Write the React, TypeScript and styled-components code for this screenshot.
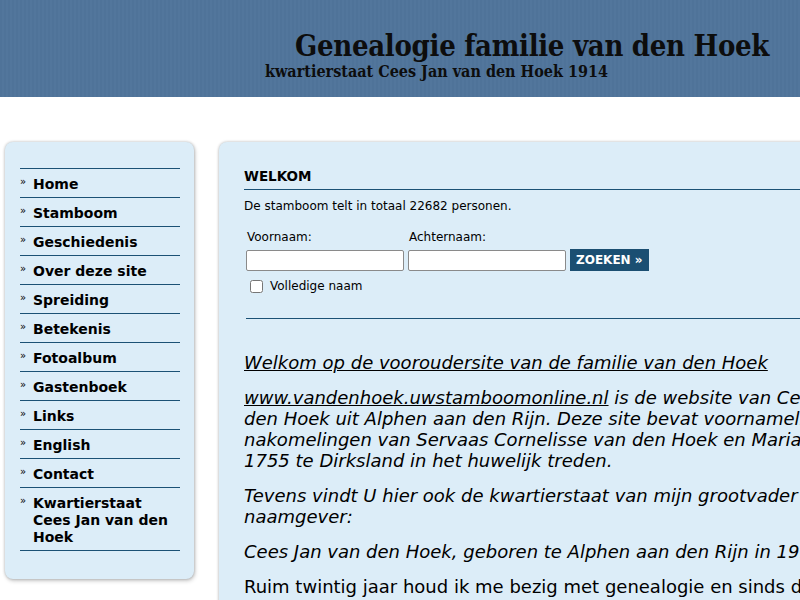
import React from "react";
import styled, { createGlobalStyle } from "styled-components";

const GlobalStyle = createGlobalStyle`
  html, body {
    margin: 0;
    padding: 0;
    background: #ffffff;
    overflow-x: hidden;
  }
  body {
    font-family: "DejaVu Sans", Verdana, sans-serif;
    color: #000;
  }
`;

const Header = styled.header`
  height: 97px;
  box-sizing: border-box;
  padding-top: 28px;
  background: repeating-linear-gradient(
    90deg,
    #4f7399 0px,
    #4f7399 2px,
    #52769c 2px,
    #52769c 4px
  );
`;

const SiteTitle = styled.h1`
  margin: 0 0 0 295px;
  font-family: "DejaVu Serif Condensed", "Liberation Serif", serif;
  font-weight: bold;
  font-size: 29px;
  line-height: 36px;
  color: #0d0d0d;
  white-space: nowrap;
  letter-spacing: -0.3px;
`;

const SiteSubtitle = styled.div`
  margin: -1px 0 0 265px;
  font-family: "DejaVu Serif Condensed", "Liberation Serif", serif;
  font-weight: bold;
  font-size: 16px;
  line-height: 18px;
  color: #0d0d0d;
  white-space: nowrap;
`;

const Page = styled.div`
  display: flex;
  align-items: flex-start;
  gap: 25px;
  padding: 45px 0 0 5px;
  width: 1000px;
`;

const Panel = styled.div`
  background: #dcedf8;
  border-radius: 8px;
  box-shadow: 0 0 3px rgba(0, 0, 0, 0.25), 1px 2px 4px rgba(0, 0, 0, 0.2);
  box-sizing: border-box;
`;

const Sidebar = styled(Panel)`
  width: 189px;
  flex: none;
  padding: 26px 14px 28px 15px;
`;

const NavList = styled.ul`
  list-style: none;
  margin: 0;
  padding: 0;
  border-top: 1px solid #1b5175;
`;

const NavItem = styled.li`
  display: flex;
  padding: 7px 0 4px 0;
  border-bottom: 1px solid #1b5175;
  font-size: 14px;
  font-weight: bold;
  line-height: 17px;

  &::before {
    content: "»";
    flex: none;
    width: 13px;
    font-size: 10px;
    line-height: 12px;
    font-weight: normal;
  }
`;

const Main = styled(Panel)`
  width: 721px;
  flex: none;
  padding: 26px 25px 30px 25px;
  min-height: 500px;
`;

const SectionTitle = styled.h2`
  margin: 0;
  padding: 0 0 4px;
  font-size: 13.5px;
  font-weight: bold;
  line-height: 17px;
  border-bottom: 1px solid #1b5175;
`;

const Count = styled.p`
  margin: 8px 0 0;
  font-size: 12px;
  line-height: 16px;
`;

const SearchForm = styled.form`
  display: grid;
  grid-template-columns: 158px 158px auto;
  column-gap: 4px;
  align-items: end;
  margin: 15px 0 0 2px;
  padding-bottom: 24px;
  border-bottom: 1px solid #1b5175;
`;

const Label = styled.label`
  font-size: 12px;
  line-height: 16px;
  padding: 0 0 4px 1px;
`;

const TextInput = styled.input`
  box-sizing: border-box;
  width: 158px;
  height: 21px;
  margin: 0;
  border: 1px solid #8a8a8a;
  border-radius: 2px;
  background: #fff;
`;

const SearchButton = styled.button`
  align-self: start;
  justify-self: start;
  height: 22px;
  margin: 0;
  padding: 0 6px;
  border: none;
  background: #1b4f72;
  color: #fff;
  font-family: "DejaVu Sans", Verdana, sans-serif;
  font-size: 12px;
  font-weight: bold;
`;

const CheckRow = styled.label`
  grid-column: 1 / 4;
  display: flex;
  align-items: center;
  gap: 7px;
  margin-top: 7px;
  padding-left: 4px;
  font-size: 12px;
  line-height: 16px;

  input {
    margin: 0;
    width: 13px;
    height: 13px;
  }
`;

const Story = styled.div`
  padding-top: 33px;
  font-size: 18px;
  line-height: 21px;
`;

const Para = styled.p<{ $italic?: boolean }>`
  margin: 0 0 14px;
  font-style: ${(p) => (p.$italic ? "italic" : "normal")};
`;

const Underlined = styled.span`
  text-decoration: underline;
`;

const navItems = [
  "Home",
  "Stamboom",
  "Geschiedenis",
  "Over deze site",
  "Spreiding",
  "Betekenis",
  "Fotoalbum",
  "Gastenboek",
  "Links",
  "English",
  "Contact",
  "Kwartierstaat Cees Jan van den Hoek",
];

export default function App() {
  return (
    <>
      <GlobalStyle />
      <Header>
        <SiteTitle>Genealogie familie van den Hoek</SiteTitle>
        <SiteSubtitle>kwartierstaat Cees Jan van den Hoek 1914</SiteSubtitle>
      </Header>
      <Page>
        <Sidebar>
          <NavList>
            {navItems.map((item) => (
              <NavItem key={item}>
                <span>{item}</span>
              </NavItem>
            ))}
          </NavList>
        </Sidebar>
        <Main>
          <SectionTitle>WELKOM</SectionTitle>
          <Count>De stamboom telt in totaal 22682 personen.</Count>
          <SearchForm onSubmit={(e) => e.preventDefault()}>
            <Label>Voornaam:</Label>
            <Label>Achternaam:</Label>
            <span />
            <TextInput type="text" />
            <TextInput type="text" />
            <SearchButton type="submit">ZOEKEN »</SearchButton>
            <CheckRow>
              <input type="checkbox" />
              Volledige naam
            </CheckRow>
          </SearchForm>
          <Story>
            <Para $italic>
              <Underlined>Welkom op de vooroudersite van de familie van den Hoek</Underlined>
            </Para>
            <Para $italic>
              <Underlined>www.vandenhoek.uwstamboomonline.nl</Underlined> is de website van
              Cees Jan van den Hoek uit Alphen aan den Rijn. Deze site bevat voornamelijk de
              nakomelingen van Servaas Cornelisse van den Hoek en Maria Kok, die in
              1755 te Dirksland in het huwelijk treden.
            </Para>
            <Para $italic>
              Tevens vindt U hier ook de kwartierstaat van mijn grootvader en
              naamgever:
            </Para>
            <Para $italic>
              Cees Jan van den Hoek, geboren te Alphen aan den Rijn in 1914.
            </Para>
            <Para>
              Ruim twintig jaar houd ik me bezig met genealogie en sinds die tijd
              heb ik veel gegevens verzameld.
            </Para>
          </Story>
        </Main>
      </Page>
    </>
  );
}
